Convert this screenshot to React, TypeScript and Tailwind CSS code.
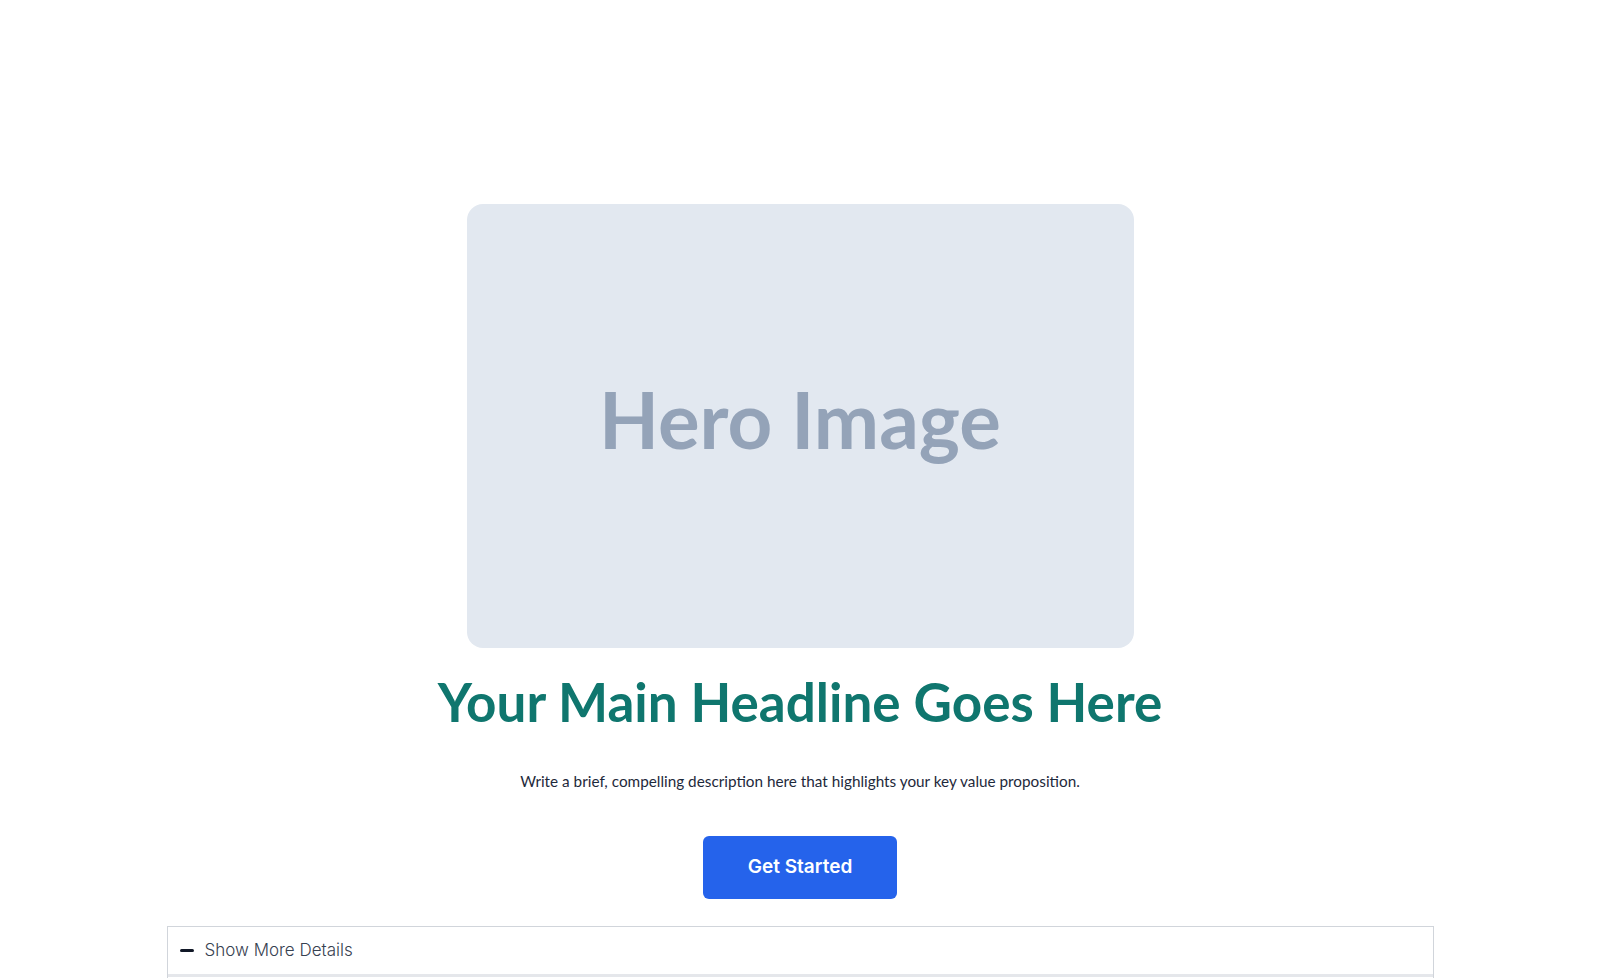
import React from "react";

export default function App() {
  return (
    <div className="min-h-screen bg-white flex flex-col items-center pt-[204px]">
      <div className="w-[667px] h-[444px] rounded-2xl bg-[#e2e8f0] flex items-center justify-center pb-[14px]">
        <span className="font-['Lato',sans-serif] text-[78px] font-bold text-[#94a3b8] leading-none">
          Hero Image
        </span>
      </div>
      <h1 className="font-['Lato',sans-serif] mt-[27px] text-[53px] leading-none font-bold text-[#0f766e]">
        Your Main Headline Goes Here
      </h1>
      <p className="font-['Lato',sans-serif] mt-[41px] text-[15.3px] leading-6 text-[#1e293b]">
        Write a brief, compelling description here that highlights your key value proposition.
      </p>
      <button className="font-['Inter',sans-serif] mt-[43px] h-[63px] px-[45px] rounded-md bg-[#2563eb] text-white text-[19px] font-semibold">
        Get Started
      </button>
      <div className="mt-[27px] w-[1267px] border border-[#d1d5db]">
        <div className="h-[47px] flex items-center pl-[12px] gap-[11px]">
          <span className="block w-[14px] h-[3px] bg-[#111827] rounded-sm" />
          <span className="font-['Inter',sans-serif] text-[17px] font-light text-[#374151]">
            Show More Details
          </span>
        </div>
        <div className="border-t-[3px] border-[#e5e7eb] h-[40px]" />
      </div>
    </div>
  );
}
